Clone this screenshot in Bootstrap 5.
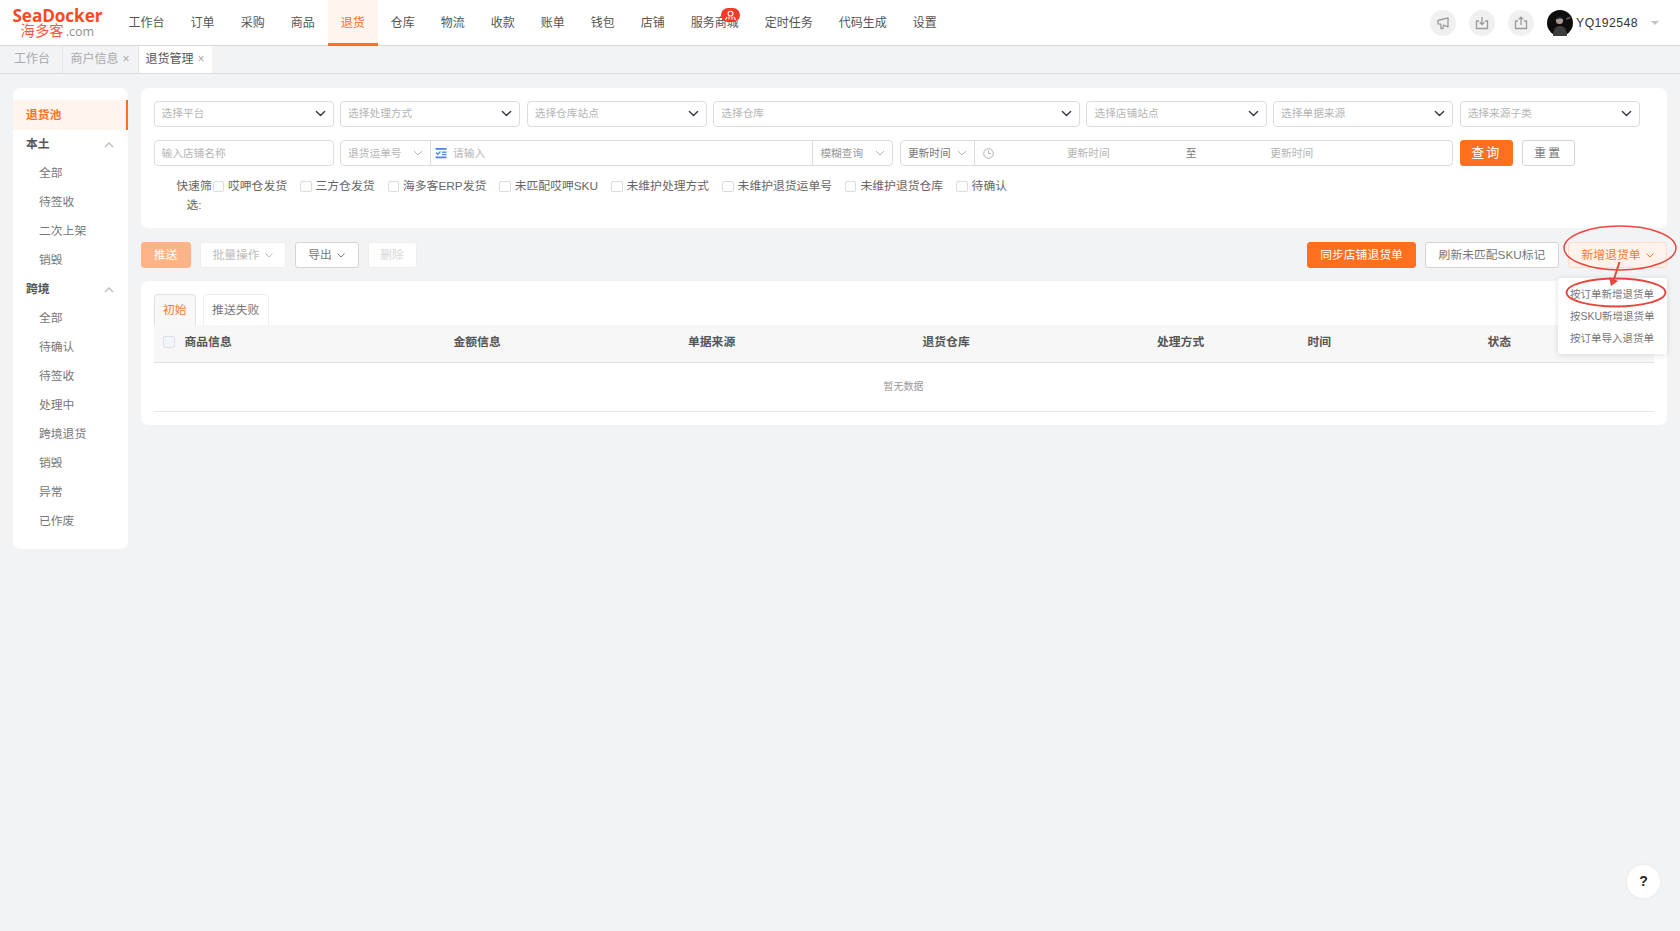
<!DOCTYPE html>
<html lang="zh-CN">
<head>
<meta charset="utf-8">
<title>退货管理</title>
<link href="https://cdn.jsdelivr.net/npm/bootstrap@5.3.0/dist/css/bootstrap.min.css" rel="stylesheet">
<style>
html,body{height:100%}
body{background:#f2f3f5;color:#666;font-family:"Liberation Sans","Noto Sans CJK SC",sans-serif;font-size:11.8px;overflow:hidden;height:931px;position:relative}
.topbar{height:46px;background:#fff;border-bottom:1px solid #d9d9d9;box-shadow:0 1px 2px rgba(0,0,0,.08)}
.brand-box{width:115.6px;padding:8px 0 0 12.5px;line-height:1}
.brand-en{color:#fa4a1e;font-weight:700;font-size:17.2px;font-family:"Open Sans","Liberation Sans",sans-serif;letter-spacing:-.1px;line-height:15px;display:block}
.brand-cn{color:#fa5a3c;font-size:14.4px;padding-left:8px;line-height:17px;display:block;letter-spacing:0}
.brand-cn span{color:#8f8f8f;font-size:12.5px;margin-left:2px;font-family:"Open Sans",sans-serif}
.main-nav-link{display:block;height:46px;line-height:46px;padding:0 13px;font-size:12px;color:#555;text-decoration:none;position:relative}
.main-nav-link.on{background:#fff5ef;color:#ff6f1e;border-bottom:3px solid #ff6f1e}
.mall-badge{position:absolute;left:43px;top:8px;width:19px;height:14px;border-radius:8px;background:#f53a28;display:flex;align-items:center;justify-content:center}
.top-circle{width:26.5px;height:26.5px;border-radius:50%;background:#f0f0f0;display:flex;align-items:center;justify-content:center}
.top-tools{padding-right:21px}
.user-name{font-size:12.2px;color:#333;letter-spacing:.45px;margin-left:3px}
.user-caret{width:0;height:0;border:4px solid transparent;border-top:4px solid #c4c4c4;margin:4px 0 0 13px}
.tab-strip{height:28px;background:#f2f3f5;border-bottom:1px solid #dcdcdc}
.page-tab{height:27px;line-height:27px;font-size:12px;color:#aaa;border-right:1px solid #e4e5e7;padding:0 8px;white-space:nowrap}
.page-tab.first{padding:0 14px;width:62.5px}
.page-tab.on{background:#fff;color:#555;border-right:0;padding:0 7px}
.page-tab i{font-style:normal;color:#aaa;margin-left:4px;font-size:12px}
.page-body{padding:14px 13px 0 13px;gap:12.5px;align-items:flex-start}
.side-box{width:115px;height:461px;background:#fff;border-radius:7px;padding-top:12px;flex:none}
.side-head{height:30px;line-height:30px;padding-left:13px;color:#ff6f1e;font-weight:700;background:#fff5ef;border-right:2px solid #ff6f1e}
.side-group{height:29px;line-height:29px;padding:0 14px 0 13px;font-weight:700;color:#555;margin-top:0}
.side-item{height:29px;line-height:29px;padding-left:26px;color:#777}
.content-col{flex:1;min-width:0}
.filter-box{background:#fff;border-radius:7px;height:140px;padding:12.5px 13px 0}
.filter-grid{display:grid;grid-template-columns:repeat(8,180.1px);column-gap:6.5px;row-gap:13.5px}
.span-two{grid-column:span 2}
.span-three{grid-column:span 3}
.flt-sel.form-select,.flt-in.form-control{height:26px;min-height:26px;font-size:10.7px;color:#b5b5b5;padding:0 24px 0 7px;border:1px solid #dcdcdc;border-radius:4px;background-size:11px 11px;background-position:right 7px center;box-shadow:none}
.flt-in.form-control::placeholder{color:#b5b5b5}
.flt-in.form-control{padding-right:7px}
.flt-group{height:26px;border:1px solid #dcdcdc;border-radius:4px;font-size:10.7px;color:#b5b5b5;background:#fff;align-items:center}
.flt-seg{height:100%;display:flex;align-items:center;justify-content:space-between;border-right:1px solid #dcdcdc;padding:0 7px}
.flt-sep{color:#777}
.btn-row{grid-column:span 1;gap:9px;width:240px}
.act-btn.btn{height:26px;padding:0;font-size:11.8px;line-height:24px;border-radius:3px;border:1px solid #d5d5d5;background:#fff;color:#777;display:inline-flex;align-items:center;justify-content:center;gap:5px}
.act-btn.orange{background:#ff6f1e;border-color:#ff6f1e;color:#fff}
.act-btn.fade-or{background:#ffb488;border-color:#ffb488;color:#fff}
.act-btn.dim{border-color:#eeeeee;color:#bdbdbd}
.act-btn.dimmer{border-color:#eeeeee;color:#d5d5d5}
.act-btn.tint{background:#fff2ea;border-color:#ffdcc8;color:#ff7a2e}
.quick-row{padding:14px 0 0 22px;align-items:flex-start}
.quick-label{width:37px;line-height:19px;text-align:center;margin-top:-3px}
.quick-opt{display:flex;align-items:center;margin-right:13px;line-height:13px;white-space:nowrap}
.quick-opt b{font-weight:400}
.box-mark{width:11.5px;height:11.5px;border:1px solid #dcdcdc;border-radius:2px;background:#fff;margin-right:4px;display:inline-block;flex:none}
.tool-row{height:26px;margin:14px 0 13px;gap:9px}
.table-box{background:#fff;border-radius:7px;height:144px;padding:13px 13px 0}
.ret-tabs.nav{border:0;gap:6.5px;height:31px;flex-wrap:nowrap}
.ret-tabs .nav-link{height:31px;padding:0 8.5px;line-height:31px;font-size:11.8px;color:#777;border:1px solid #eeeeee;border-bottom:0;border-radius:4px 4px 0 0;background:#fff}
.ret-tabs .nav-link.active{color:#ff7a2e;background:#f8f8f8}
.ret-table.table{table-layout:fixed;width:1500px;margin:0;font-size:11.8px;color:#666}
.ret-table.table th{height:37px;background:#f7f7f7;border-bottom:1px solid #e3e3e3;padding:0;vertical-align:middle;font-weight:700;color:#555;box-shadow:none}
.ret-table.table td{height:49px;text-align:center;vertical-align:middle;color:#999;font-size:10px;padding:0;border-bottom:1px solid #e8e8e8;background:#fff;box-shadow:none}
.head-check{width:12px;height:12px;border:1px solid #dcdfe8;background:#f1f4fb;border-radius:2px;display:inline-block;margin:0 10px 0 9px;vertical-align:-2px}
.new-menu.dropdown-menu{position:absolute;top:36px;right:0;left:auto;width:109px;min-width:0;height:76px;padding:5px 0 0;border:0;border-radius:3px;box-shadow:0 1px 6px rgba(0,0,0,.13);font-size:10.5px;z-index:5}
.new-menu .dropdown-item{height:22px;line-height:22px;padding:0 0 0 12px;color:#777;white-space:nowrap;background:none}
.help-fab{position:absolute;left:1627px;top:865px;width:33px;height:33px;border-radius:50%;background:#fff;color:#222;font-weight:700;font-size:14px;display:flex;align-items:center;justify-content:center;box-shadow:0 0 4px rgba(0,0,0,.05)}
.note-layer{position:absolute;left:0;top:0;pointer-events:none;z-index:9}
</style>
</head>
<body>
<header class="topbar d-flex align-items-start">
  <div class="brand-box flex-shrink-0">
    <span class="brand-en">SeaDocker</span>
    <span class="brand-cn">海多客<span>.com</span></span>
  </div>
  <nav class="d-flex">
    <a class="main-nav-link" href="#">工作台</a>
    <a class="main-nav-link" href="#">订单</a>
    <a class="main-nav-link" href="#">采购</a>
    <a class="main-nav-link" href="#">商品</a>
    <a class="main-nav-link on" href="#">退货</a>
    <a class="main-nav-link" href="#">仓库</a>
    <a class="main-nav-link" href="#">物流</a>
    <a class="main-nav-link" href="#">收款</a>
    <a class="main-nav-link" href="#">账单</a>
    <a class="main-nav-link" href="#">钱包</a>
    <a class="main-nav-link" href="#">店铺</a>
    <a class="main-nav-link" href="#">服务商城<span class="mall-badge"><svg width="13" height="11" viewBox="0 0 13 11" fill="none" stroke="#fff" stroke-width="1.1"><circle cx="6.5" cy="3.6" r="2.4"/><path d="M1 9.5c1.5 0 1.5-1 2-2.5M12 9.5c-1.500 0-1.500-1-2-2.500M5 6.500v3M8 6.500v3"/></svg></span></a>
    <a class="main-nav-link" href="#">定时任务</a>
    <a class="main-nav-link" href="#">代码生成</a>
    <a class="main-nav-link" href="#">设置</a>
  </nav>
  <div class="top-tools ms-auto d-flex align-items-center" style="height:46px">
    <span class="top-circle" style="margin-right:12.5px"><svg width="14" height="14" viewBox="0 0 14 14" fill="none" stroke="#9a9a9a" stroke-width="1.300" stroke-linejoin="round"><path d="M2 4.500 12 1.800v9L7.500 9.200 7 12.500H5L4.800 8.200 2 7.800z"/></svg></span>
    <span class="top-circle" style="margin-right:12.5px"><svg width="14" height="14" viewBox="0 0 14 14" fill="none" stroke="#9a9a9a" stroke-width="1.300"><path d="M4 5H1.500v7.500h11V5H10M7 1v7.500M4.700 6.300 7 8.600l2.300-2.300"/></svg></span>
    <span class="top-circle" style="margin-right:13px"><svg width="14" height="14" viewBox="0 0 14 14" fill="none" stroke="#9a9a9a" stroke-width="1.300"><path d="M4 5H1.500v7.500h11V5H10M7 9V1.200M4.700 3.400 7 1.100l2.300 2.300"/></svg></span>
    <svg width="26" height="26" viewBox="0 0 26 26"><circle cx="13" cy="13" r="13" fill="#0d0d0d"/><path d="M6 26c0-7 3-10 7-10s7 3 7 10z" fill="#3d3d3d"/><circle cx="12.500" cy="10.500" r="3.600" fill="#a89a90"/><path d="M8.500 10c0-4 7-5 8-.5-2-1.500-5-1.500-8 .5z" fill="#222"/><path d="M19 8l4-1.500.5 2-4 1.500z" fill="#555"/></svg>
    <span class="user-name">YQ192548</span>
    <span class="user-caret"></span>
  </div>
</header>

<div class="tab-strip d-flex">
  <div class="page-tab first">工作台</div>
  <div class="page-tab">商户信息<i>×</i></div>
  <div class="page-tab on">退货管理<i>×</i></div>
</div>

<div class="page-body d-flex">
  <aside class="side-box">
    <div class="side-head">退货池</div>
    <div class="side-group d-flex justify-content-between align-items-center">本土<svg width="10" height="6" viewBox="0 0 10 6" fill="none" stroke="#c2c2c2" stroke-width="1.500"><path d="M1 5l4-4 4 4"/></svg></div>
    <div class="side-item">全部</div>
    <div class="side-item">待签收</div>
    <div class="side-item">二次上架</div>
    <div class="side-item">销毁</div>
    <div class="side-group d-flex justify-content-between align-items-center">跨境<svg width="10" height="6" viewBox="0 0 10 6" fill="none" stroke="#c2c2c2" stroke-width="1.500"><path d="M1 5l4-4 4 4"/></svg></div>
    <div class="side-item">全部</div>
    <div class="side-item">待确认</div>
    <div class="side-item">待签收</div>
    <div class="side-item">处理中</div>
    <div class="side-item">跨境退货</div>
    <div class="side-item">销毁</div>
    <div class="side-item">异常</div>
    <div class="side-item">已作废</div>
  </aside>

  <main class="content-col">
    <section class="filter-box">
      <div class="filter-grid">
        <select class="form-select flt-sel"><option>选择平台</option></select>
        <select class="form-select flt-sel"><option>选择处理方式</option></select>
        <select class="form-select flt-sel"><option>选择仓库站点</option></select>
        <select class="form-select flt-sel span-two"><option>选择仓库</option></select>
        <select class="form-select flt-sel"><option>选择店铺站点</option></select>
        <select class="form-select flt-sel"><option>选择单据来源</option></select>
        <select class="form-select flt-sel"><option>选择来源子类</option></select>

        <input class="form-control flt-in" placeholder="输入店铺名称">
        <div class="flt-group span-three d-flex">
          <div class="flt-seg" style="width:90px"><span>退货运单号</span><svg width="10" height="6" viewBox="0 0 10 6" fill="none" stroke="#b5b5b5"><path d="M1 1l4 4 4-4"/></svg></div>
          <div class="flt-seg justify-content-start flex-grow-1" style="padding-left:4px;gap:6px"><svg width="12" height="12" viewBox="0 0 12 12"><rect x="0.500" y="1" width="11" height="1.800" fill="#4f86ec"/><rect x="0.500" y="9.500" width="11" height="1.800" fill="#4f86ec"/><rect x="7" y="4.500" width="4.500" height="1.400" fill="#4f86ec"/><rect x="7" y="7" width="4.500" height="1.200" fill="#4f86ec"/><path d="M1 5.500l1.800 1.800 2.700-2.800" fill="none" stroke="#4f86ec" stroke-width="1.300"/></svg><span>请输入</span></div>
          <div class="flt-seg border-0" style="width:79px"><span style="color:#999">模糊查询</span><svg width="10" height="6" viewBox="0 0 10 6" fill="none" stroke="#b5b5b5"><path d="M1 1l4 4 4-4"/></svg></div>
        </div>
        <div class="flt-group span-three d-flex">
          <div class="flt-seg" style="width:74px"><span style="color:#777">更新时间</span><svg width="10" height="6" viewBox="0 0 10 6" fill="none" stroke="#b5b5b5"><path d="M1 1l4 4 4-4"/></svg></div>
          <svg class="ms-2" width="11" height="11" viewBox="0 0 11 11" fill="none" stroke="#b0b0b0"><circle cx="5.500" cy="5.500" r="4.800"/><path d="M5.500 2.500v3h2.500"/></svg>
          <span style="margin-left:73px">更新时间</span>
          <span class="flt-sep" style="margin-left:76px">至</span>
          <span style="margin-left:74px">更新时间</span>
        </div>
        <div class="btn-row d-flex">
          <button class="btn act-btn orange" style="width:53px;letter-spacing:2px;font-size:13px">查询</button>
          <button class="btn act-btn" style="width:53px;letter-spacing:2px">重置</button>
        </div>
      </div>
      <div class="quick-row d-flex">
        <div class="quick-label">快速筛选:</div>
        <label class="quick-opt"><span class="box-mark"></span><b>哎呷仓发货</b></label>
        <label class="quick-opt"><span class="box-mark"></span><b>三方仓发货</b></label>
        <label class="quick-opt"><span class="box-mark"></span><b>海多客ERP发货</b></label>
        <label class="quick-opt"><span class="box-mark"></span><b>未匹配哎呷SKU</b></label>
        <label class="quick-opt"><span class="box-mark"></span><b>未维护处理方式</b></label>
        <label class="quick-opt"><span class="box-mark"></span><b>未维护退货运单号</b></label>
        <label class="quick-opt"><span class="box-mark"></span><b>未维护退货仓库</b></label>
        <label class="quick-opt"><span class="box-mark"></span><b>待确认</b></label>
      </div>
    </section>

    <div class="tool-row d-flex">
      <button class="btn act-btn fade-or" style="width:50px">推送</button>
      <button class="btn act-btn dim" style="width:86px">批量操作<svg width="8" height="5" viewBox="0 0 8 5" fill="none" stroke="#bdbdbd"><path d="M.5.500 4 4 7.500.500"/></svg></button>
      <button class="btn act-btn" style="width:64px">导出<svg width="8" height="5" viewBox="0 0 8 5" fill="none" stroke="#777"><path d="M.5.500 4 4 7.500.500"/></svg></button>
      <button class="btn act-btn dimmer" style="width:49px">删除</button>
      <button class="btn act-btn orange ms-auto" style="width:109px">同步店铺退货单</button>
      <button class="btn act-btn" style="width:134px">刷新未匹配SKU标记</button>
      <div class="dropdown position-relative">
        <button class="btn act-btn tint" style="width:99px">新增退货单<svg width="8" height="5" viewBox="0 0 8 5" fill="none" stroke="#ff7a2e"><path d="M.5.500 4 4 7.500.500"/></svg></button>
        <div class="dropdown-menu show new-menu">
          <a class="dropdown-item" href="#">按订单新增退货单</a>
          <a class="dropdown-item" href="#">按SKU新增退货单</a>
          <a class="dropdown-item" href="#">按订单导入退货单</a>
        </div>
      </div>
    </div>

    <section class="table-box">
      <ul class="nav nav-tabs ret-tabs">
        <li class="nav-item"><a class="nav-link active" href="#">初始</a></li>
        <li class="nav-item"><a class="nav-link" href="#">推送失败</a></li>
      </ul>
      <table class="table ret-table">
        <colgroup><col style="width:300px"><col style="width:234.500px"><col style="width:234.500px"><col style="width:234.500px"><col style="width:150.500px"><col style="width:180px"><col></colgroup>
        <thead><tr><th><span class="head-check"></span>商品信息</th><th>金额信息</th><th>单据来源</th><th>退货仓库</th><th>处理方式</th><th>时间</th><th>状态</th></tr></thead>
        <tbody><tr><td colspan="7">暂无数据</td></tr></tbody>
      </table>
    </section>
  </main>
</div>

<div class="help-fab">?</div>

<svg class="note-layer" width="1680" height="931" viewBox="0 0 1680 931" fill="none">
  <ellipse cx="1620" cy="248" rx="56" ry="22" stroke="#e8453c" stroke-width="1.500"/>
  <ellipse cx="1616" cy="292.500" rx="49.500" ry="14" stroke="#e8453c" stroke-width="1.800"/>
  <path d="M1619.500 262 1614 279" stroke="#e8453c" stroke-width="2"/>
  <path d="M1609 277 1618 281 1611 286z" fill="#e8453c"/>
</svg>
</body>
</html>
